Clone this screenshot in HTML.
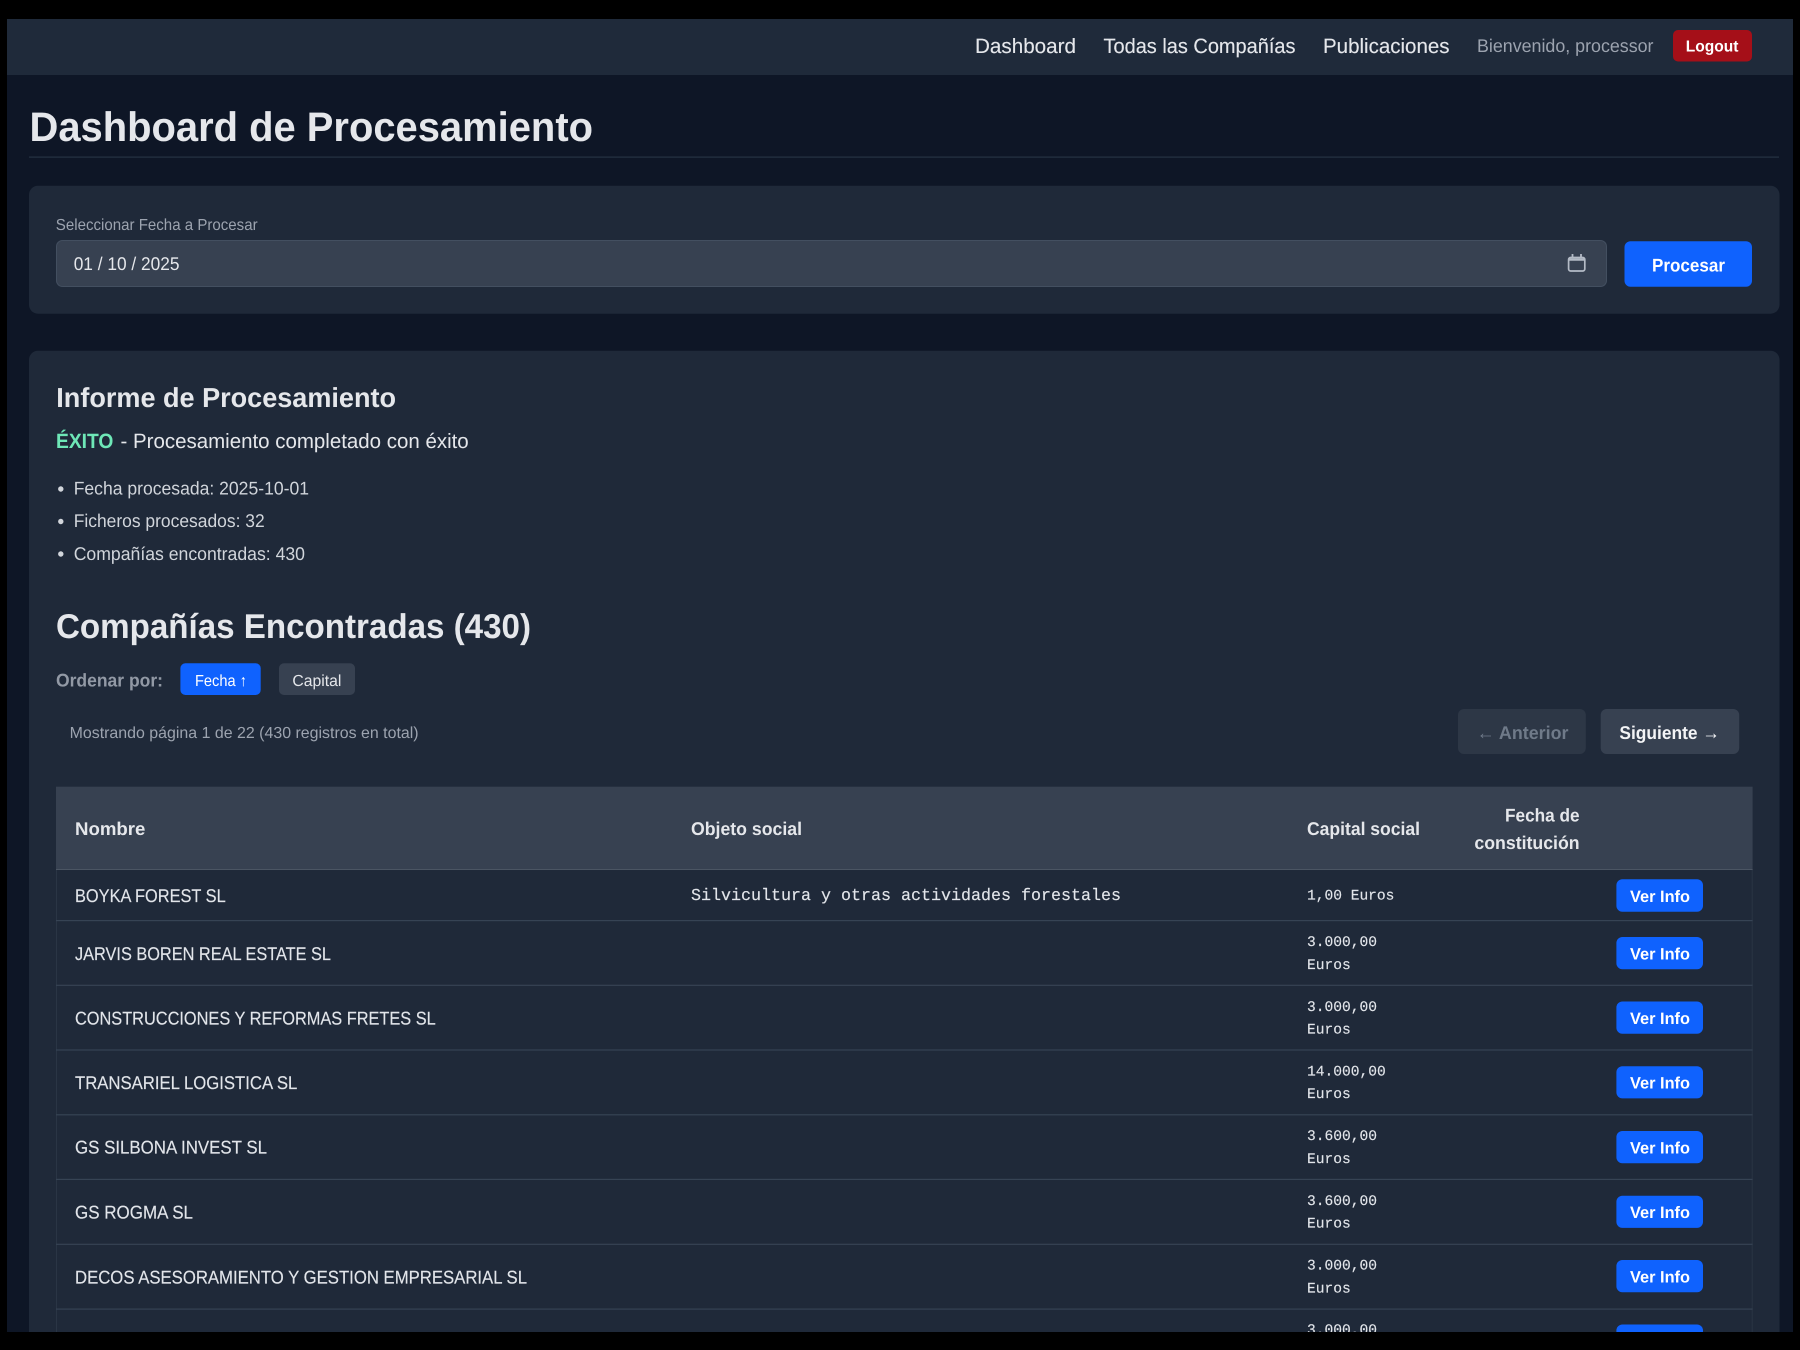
<!DOCTYPE html>
<html lang="es">
<head>
<meta charset="utf-8">
<title>Dashboard de Procesamiento</title>
<style>
html,body{margin:0;padding:0;background:#000;width:1800px;height:1350px;overflow:hidden}
svg{display:block}
text{font-family:"Liberation Sans",sans-serif;white-space:pre;text-rendering:geometricPrecision;transform:translateY(-1px)}
.b{font-weight:700}
.m{font-family:"Liberation Mono",monospace;fill:#e2e5ea;stroke:#e2e5ea;stroke-width:.15;transform:translateY(-1.2px)}
.n{font-size:20.7px;fill:#e5e7eb;stroke:#e5e7eb;stroke-width:.12;transform:none}
.g{fill:#9ca3af}
.w{fill:#fff}
.t{fill:#e5e7eb}
.h{fill:#e5e7eb;font-size:18.4px;font-weight:700}
.r{fill:#e2e5ea;font-size:18.4px;stroke:#e2e5ea;stroke-width:.15;transform:translateY(-.6px)}
.c{font-size:14.6px}
.v{fill:#fff;font-size:16.5px;font-weight:700;transform:none}
.k{transform:none}
</style>
</head>
<body>
<svg xmlns="http://www.w3.org/2000/svg" width="1800" height="1350" viewBox="0 0 1800 1350">
<defs>
<clipPath id="view"><rect x="7" y="19" width="1786" height="1313"/></clipPath>
</defs>
<rect width="1800" height="1350" fill="#000"/>
<g clip-path="url(#view)">
<rect x="7" y="19" width="1786" height="1313" fill="#0e1626"/>

<!-- Nav -->
<rect x="7" y="19" width="1786" height="56" fill="#1f2a3a"/>
<text class="n" x="975" y="53" textLength="101" lengthAdjust="spacingAndGlyphs">Dashboard</text>
<text class="n" x="1103.5" y="53" textLength="192" lengthAdjust="spacingAndGlyphs">Todas las Compañías</text>
<text class="n" x="1323" y="53" textLength="126.5" lengthAdjust="spacingAndGlyphs">Publicaciones</text>
<text class="g" font-size="18.4" x="1477" y="53" textLength="176.5" lengthAdjust="spacingAndGlyphs">Bienvenido, processor</text>
<rect x="1673" y="30" width="79" height="31.5" rx="5" fill="#a50f18"/>
<text class="b w k" font-size="16" x="1685.7" y="51.7" textLength="52.7" lengthAdjust="spacingAndGlyphs">Logout</text>

<!-- Title -->
<text class="b" fill="#e5e7eb" font-size="41.3" x="29.5" y="142" textLength="563.5" lengthAdjust="spacingAndGlyphs">Dashboard de Procesamiento</text>
<rect x="29" y="156.5" width="1750" height="1.2" fill="#263243"/>

<!-- Date panel -->
<rect x="29" y="185.7" width="1750.5" height="128" rx="9" fill="#1f2939"/>
<text class="g" font-size="16" x="55.8" y="231" textLength="201.8" lengthAdjust="spacingAndGlyphs">Seleccionar Fecha a Procesar</text>
<rect x="56.5" y="240.5" width="1550" height="46" rx="6" fill="#374151" stroke="#434f60"/>
<text class="t" font-size="18.4" x="73.7" y="271" textLength="105.8" lengthAdjust="spacingAndGlyphs">01 / 10 / 2025</text>
<g fill="none" stroke="#b4bbc6">
<rect x="1568.6" y="257.5" width="16.2" height="13.5" rx="2" stroke-width="1.7"/>
<path d="M1568.6 259.6H1584.8" stroke-width="2.4"/>
<path d="M1572.5 254V258M1581 254V258" stroke-width="1.8"/>
</g>
<rect x="1624.5" y="241.3" width="127.5" height="45.4" rx="6" fill="#0f62fe"/>
<text class="b w k" font-size="18.4" x="1652" y="271.7" textLength="73" lengthAdjust="spacingAndGlyphs">Procesar</text>

<!-- Report panel -->
<rect x="29" y="350.7" width="1750.5" height="1020" rx="9" fill="#1f2939"/>
<text class="b" fill="#e5e7eb" font-size="27.5" x="56.3" y="408" textLength="339.7" lengthAdjust="spacingAndGlyphs">Informe de Procesamiento</text>
<text class="b" fill="#6ee7b7" font-size="20.7" x="56" y="449" textLength="57.4" lengthAdjust="spacingAndGlyphs">ÉXITO</text>
<text class="t" font-size="20.7" x="120.5" y="449" textLength="348.2" lengthAdjust="spacingAndGlyphs">- Procesamiento completado con éxito</text>
<circle cx="60.8" cy="489" r="2.7" fill="#d1d5db"/>
<circle cx="60.8" cy="521.5" r="2.7" fill="#d1d5db"/>
<circle cx="60.8" cy="554" r="2.7" fill="#d1d5db"/>
<text fill="#d1d5db" font-size="18.4" x="73.7" y="495.7" textLength="235.3" lengthAdjust="spacingAndGlyphs">Fecha procesada: 2025-10-01</text>
<text fill="#d1d5db" font-size="18.4" x="73.7" y="528" textLength="191" lengthAdjust="spacingAndGlyphs">Ficheros procesados: 32</text>
<text fill="#d1d5db" font-size="18.4" x="73.7" y="561" textLength="231.3" lengthAdjust="spacingAndGlyphs">Compañías encontradas: 430</text>

<text class="b" fill="#e5e7eb" font-size="34.4" x="56" y="639" textLength="475" lengthAdjust="spacingAndGlyphs">Compañías Encontradas (430)</text>

<text class="g" font-size="18.4" font-weight="700" x="56" y="687.7" textLength="107" lengthAdjust="spacingAndGlyphs" opacity=".92">Ordenar por:</text>
<rect x="180.4" y="663.3" width="80.3" height="31.7" rx="5" fill="#0f62fe"/>
<text class="w k" font-size="16" x="195" y="686" textLength="52" lengthAdjust="spacingAndGlyphs">Fecha ↑</text>
<rect x="279" y="663.3" width="76" height="31.7" rx="5" fill="#374151"/>
<text class="t k" font-size="16" x="292.4" y="686" textLength="49" lengthAdjust="spacingAndGlyphs">Capital</text>

<text class="g" font-size="16" x="69.6" y="739" textLength="349" lengthAdjust="spacingAndGlyphs">Mostrando página 1 de 22 (430 registros en total)</text>

<rect x="1458" y="709" width="127.8" height="45" rx="6" fill="#2d3746"/>
<text class="b" fill="#6f7a89" font-size="18.4" x="1476.7" y="740" textLength="91.8" lengthAdjust="spacingAndGlyphs">← Anterior</text>
<rect x="1600.7" y="709" width="138.5" height="45" rx="6" fill="#374151"/>
<text class="b" fill="#f3f4f6" font-size="18.4" x="1619.4" y="740" textLength="100.3" lengthAdjust="spacingAndGlyphs">Siguiente →</text>

<!-- Table -->
<rect x="56" y="786.7" width="1696.6" height="83.3" fill="#374151"/>
<rect x="56" y="869" width="1696.6" height="1.3" fill="#4b5563"/>
<text class="h" x="75" y="836" textLength="70.4" lengthAdjust="spacingAndGlyphs">Nombre</text>
<text class="h" x="691" y="836" textLength="111" lengthAdjust="spacingAndGlyphs">Objeto social</text>
<text class="h" x="1307" y="836" textLength="113" lengthAdjust="spacingAndGlyphs">Capital social</text>
<text class="h" x="1505" y="822.7" textLength="74.6" lengthAdjust="spacingAndGlyphs">Fecha de</text>
<text class="h" x="1474.4" y="850" textLength="105.2" lengthAdjust="spacingAndGlyphs">constitución</text>

<rect x="56" y="870" width="1696.6" height="480" fill="#1f2939"/>
<path d="M56.5 870V1332M1752.2 870V1332" stroke="#2a3545" stroke-width="1" fill="none"/>
<g fill="#364354">
<rect x="56" y="920" width="1696.6" height="1.2"/>
<rect x="56" y="984.7" width="1696.6" height="1.2"/>
<rect x="56" y="1049.4" width="1696.6" height="1.2"/>
<rect x="56" y="1114.2" width="1696.6" height="1.2"/>
<rect x="56" y="1178.8" width="1696.6" height="1.2"/>
<rect x="56" y="1243.7" width="1696.6" height="1.2"/>
<rect x="56" y="1308.5" width="1696.6" height="1.2"/>
</g>

<text class="r" x="75" y="902.7" textLength="150.7" lengthAdjust="spacingAndGlyphs">BOYKA FOREST SL</text>
<text class="r" x="75" y="960.7" textLength="256" lengthAdjust="spacingAndGlyphs">JARVIS BOREN REAL ESTATE SL</text>
<text class="r" x="75" y="1025" textLength="360.7" lengthAdjust="spacingAndGlyphs">CONSTRUCCIONES Y REFORMAS FRETES SL</text>
<text class="r" x="75" y="1089.6" textLength="222.3" lengthAdjust="spacingAndGlyphs">TRANSARIEL LOGISTICA SL</text>
<text class="r" x="75" y="1154.3" textLength="192" lengthAdjust="spacingAndGlyphs">GS SILBONA INVEST SL</text>
<text class="r" x="75" y="1219.2" textLength="118" lengthAdjust="spacingAndGlyphs">GS ROGMA SL</text>
<text class="r" x="75" y="1284" textLength="452" lengthAdjust="spacingAndGlyphs">DECOS ASESORAMIENTO Y GESTION EMPRESARIAL SL</text>

<text class="m" font-size="16.67" x="691" y="901" textLength="430" lengthAdjust="spacingAndGlyphs">Silvicultura y otras actividades forestales</text>

<text class="m c" x="1307" y="900.7" textLength="87.4" lengthAdjust="spacingAndGlyphs">1,00 Euros</text>
<text class="m c" x="1307" y="947.3">3.000,00</text><text class="m c" x="1307" y="970">Euros</text>
<text class="m c" x="1307" y="1012">3.000,00</text><text class="m c" x="1307" y="1034.7">Euros</text>
<text class="m c" x="1307" y="1076.7">14.000,00</text><text class="m c" x="1307" y="1099.4">Euros</text>
<text class="m c" x="1307" y="1141.4">3.600,00</text><text class="m c" x="1307" y="1164.1">Euros</text>
<text class="m c" x="1307" y="1206">3.600,00</text><text class="m c" x="1307" y="1228.8">Euros</text>
<text class="m c" x="1307" y="1270.8">3.000,00</text><text class="m c" x="1307" y="1293.5">Euros</text>
<text class="m c" x="1307" y="1335.3">3.000,00</text>

<g fill="#0f62fe">
<rect x="1616.4" y="879.3" width="86.6" height="32.4" rx="6"/>
<rect x="1616.4" y="937" width="86.6" height="32.2" rx="6"/>
<rect x="1616.4" y="1001.5" width="86.6" height="32.2" rx="6"/>
<rect x="1616.4" y="1066.2" width="86.6" height="32.2" rx="6"/>
<rect x="1616.4" y="1131" width="86.6" height="32.2" rx="6"/>
<rect x="1616.4" y="1195.7" width="86.6" height="32.2" rx="6"/>
<rect x="1616.4" y="1260" width="86.6" height="32.2" rx="6"/>
<rect x="1616.4" y="1324.5" width="86.6" height="32.2" rx="6"/>
</g>
<text class="v" x="1630" y="902" textLength="60" lengthAdjust="spacingAndGlyphs">Ver Info</text>
<text class="v" x="1630" y="959.5" textLength="60" lengthAdjust="spacingAndGlyphs">Ver Info</text>
<text class="v" x="1630" y="1024" textLength="60" lengthAdjust="spacingAndGlyphs">Ver Info</text>
<text class="v" x="1630" y="1088.7" textLength="60" lengthAdjust="spacingAndGlyphs">Ver Info</text>
<text class="v" x="1630" y="1153.5" textLength="60" lengthAdjust="spacingAndGlyphs">Ver Info</text>
<text class="v" x="1630" y="1218" textLength="60" lengthAdjust="spacingAndGlyphs">Ver Info</text>
<text class="v" x="1630" y="1282.5" textLength="60" lengthAdjust="spacingAndGlyphs">Ver Info</text>
</g>
</svg>
</body>
</html>
